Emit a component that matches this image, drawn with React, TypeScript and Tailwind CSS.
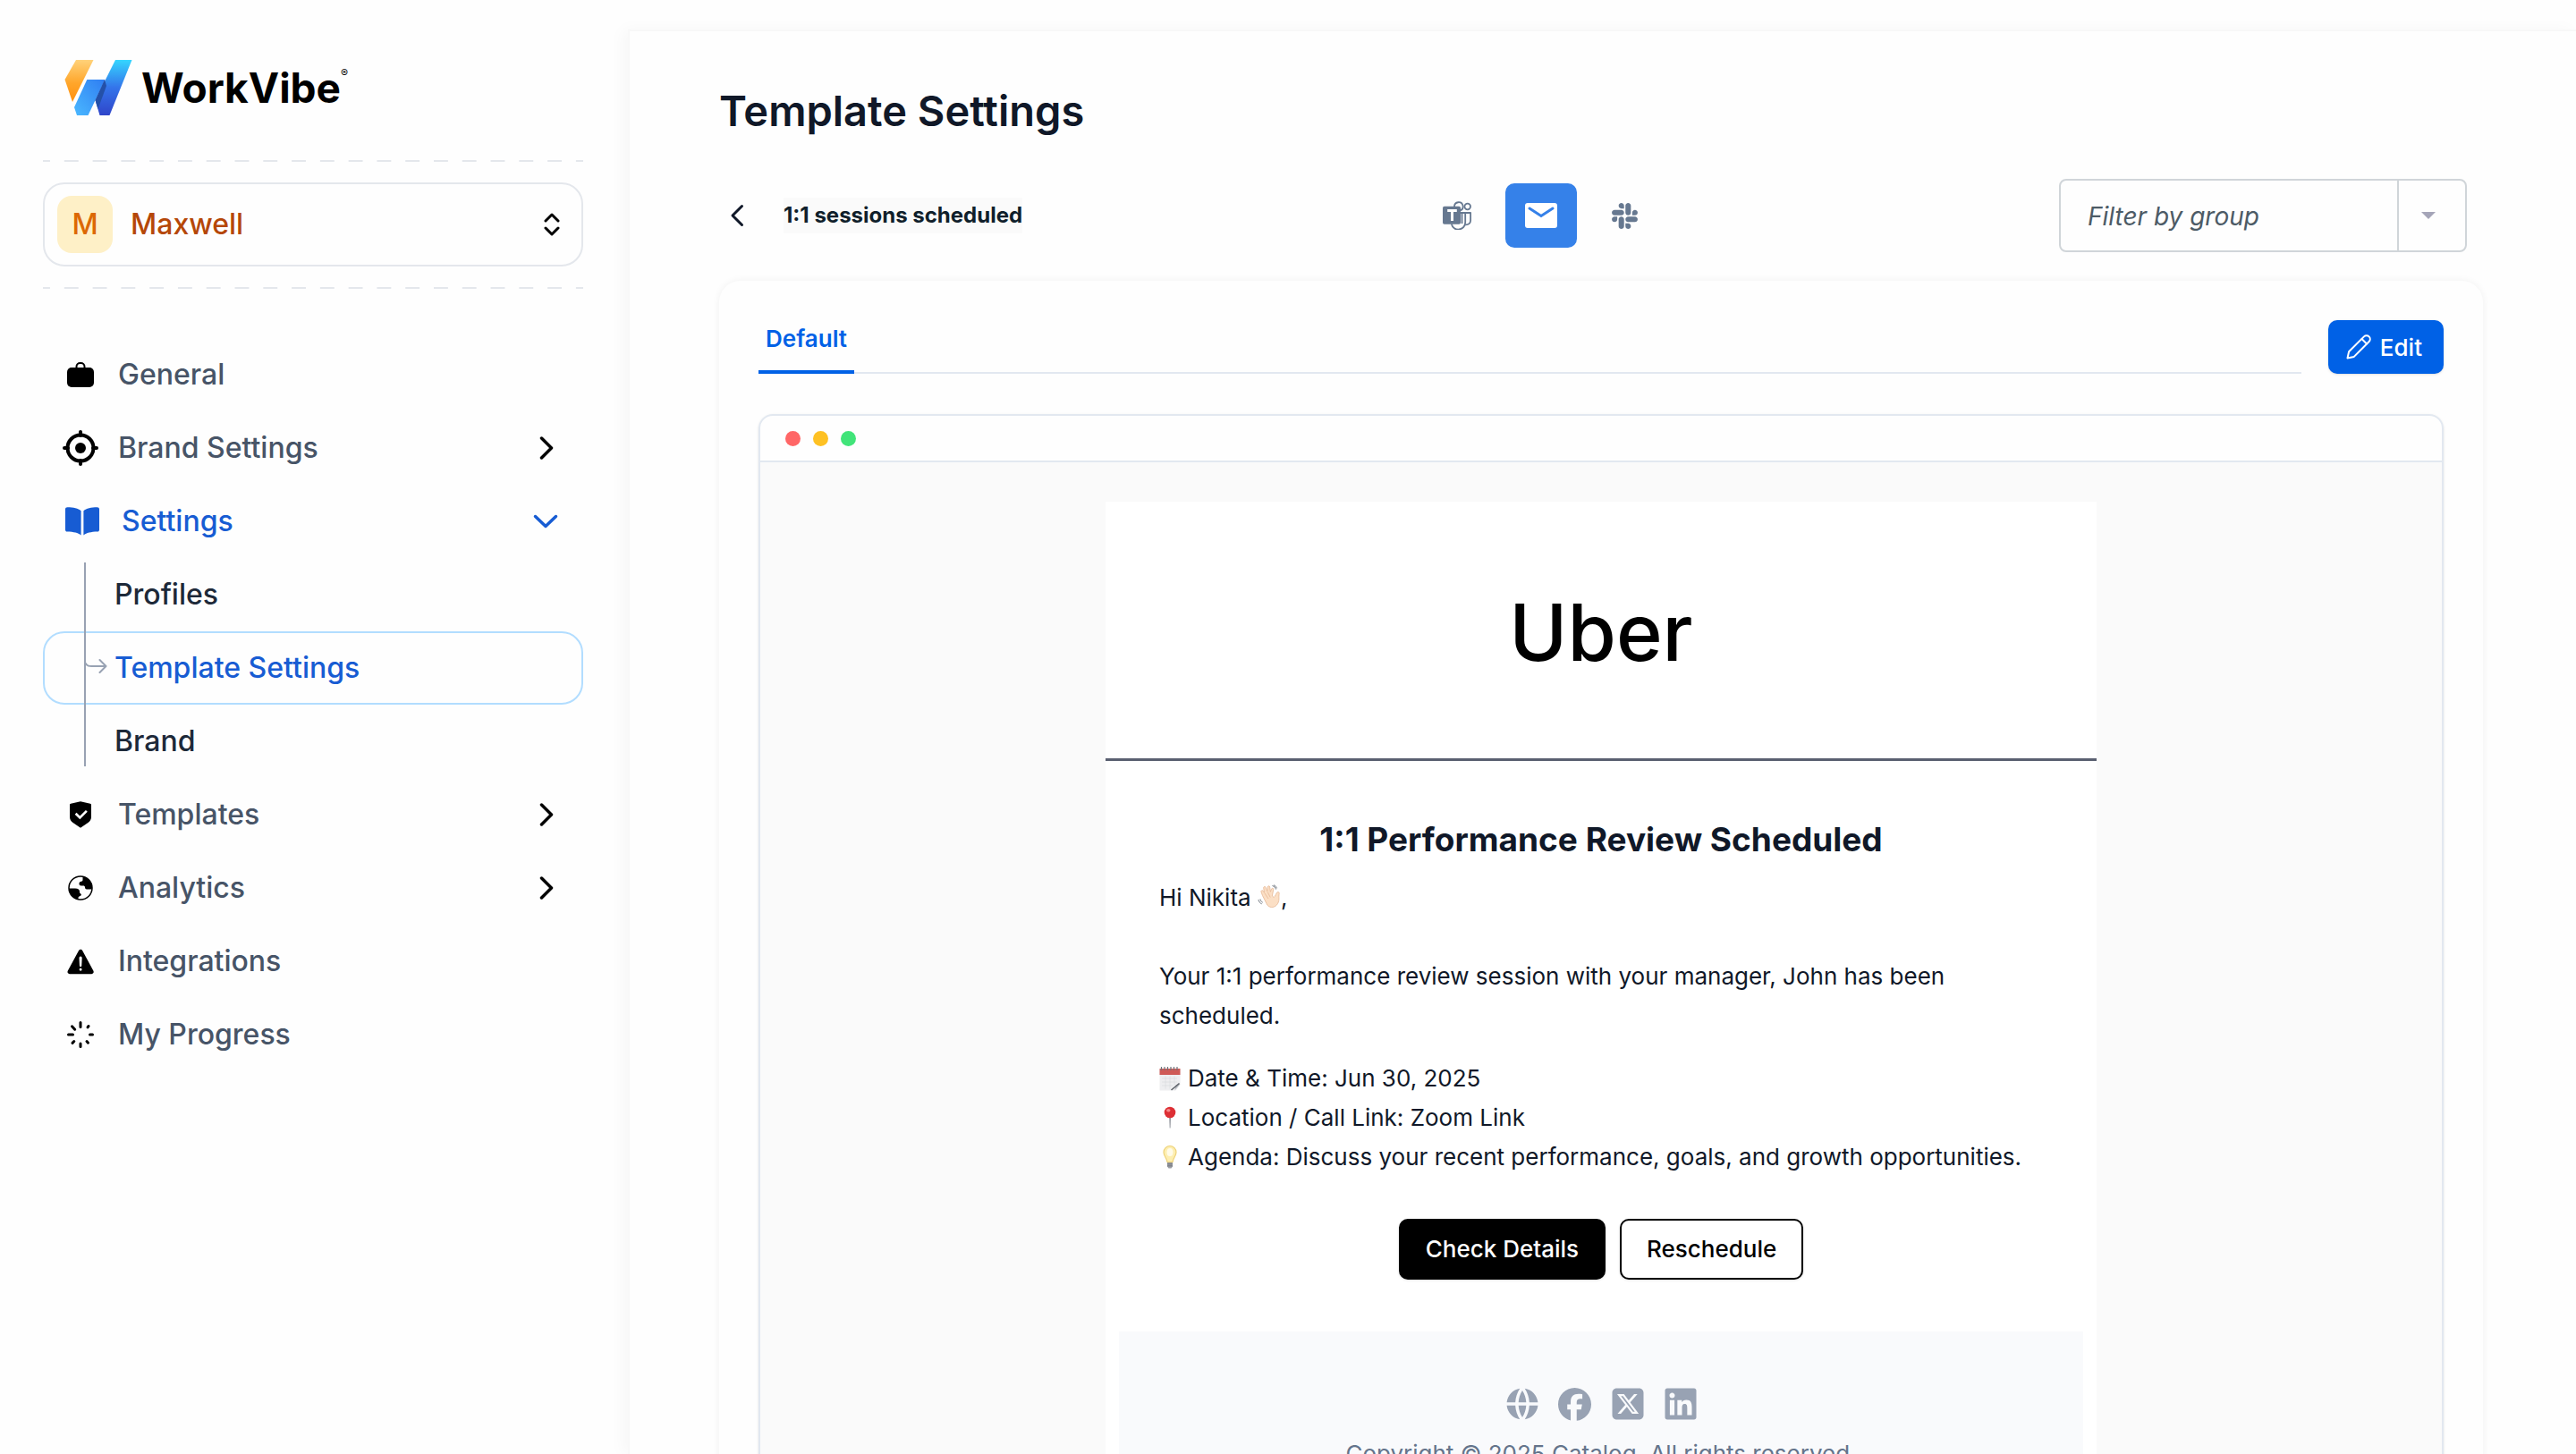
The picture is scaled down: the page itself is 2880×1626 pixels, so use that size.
import type { ReactNode } from "react";
import { FaSlack } from "react-icons/fa";
import { FaFacebook, FaLinkedin, FaSquareXTwitter } from "react-icons/fa6";
import { IoWarning } from "react-icons/io5";
import { RiGlobalFill, RiShieldCheckFill } from "react-icons/ri";

function LogoMark() {
  return (
    <svg width="76" height="62" viewBox="72 65 76 62" aria-hidden="true">
      <defs>
        <linearGradient id="wv-orange" x1="0" y1="0" x2="0" y2="1">
          <stop offset="0" stopColor="#ffd27a" />
          <stop offset="0.55" stopColor="#ffa62b" />
          <stop offset="1" stopColor="#ff8f0f" />
        </linearGradient>
        <linearGradient id="wv-cyan" x1="0" y1="0" x2="0" y2="1">
          <stop offset="0" stopColor="#35d6ff" />
          <stop offset="0.5" stopColor="#3474ea" />
          <stop offset="1" stopColor="#2f45c9" />
        </linearGradient>
        <linearGradient id="wv-blue" x1="1" y1="0" x2="0" y2="1">
          <stop offset="0" stopColor="#2f7df2" />
          <stop offset="1" stopColor="#4ab8ff" />
        </linearGradient>
      </defs>
      <path d="M85 65h19.500L81 112l-8.500-25z" fill="url(#wv-orange)" />
      <path d="M129 65h18.500L122.500 127h-11l-5-17z" fill="url(#wv-cyan)" />
      <path d="M97.300 87H117.500L98.500 127H86l-3-9z" fill="url(#wv-blue)" />
      <path d="M117 87l2 7-9.500 26-3-10z" fill="#2450a8" />
    </svg>
  );
}

function BagIcon() {
  return (
    <svg width="30" height="28" viewBox="0 0 30 28" aria-hidden="true">
      <path d="M10.500 8V5a4 4 0 0 1 4-4h1a4 4 0 0 1 4 4v3" fill="none" stroke="currentColor" strokeWidth="2" />
      <rect y="6" width="30" height="22" rx="5" fill="currentColor" />
    </svg>
  );
}

function TargetIcon() {
  return (
    <svg width="40" height="40" viewBox="0 0 40 40" fill="none" stroke="currentColor" strokeWidth="4" strokeLinecap="round" aria-hidden="true">
      <circle cx="20" cy="20" r="14.500" />
      <circle cx="20" cy="20" r="6" fill="currentColor" stroke="none" />
      <path d="M20 2v4M20 34v4M2 20h4M34 20h4" />
    </svg>
  );
}

function BookIcon() {
  return (
    <svg width="38" height="32" viewBox="0 0 38 32" fill="currentColor" aria-hidden="true">
      <path d="M17.600 4.200v27.300c-3.500-2.600-8-3.700-15.500-3.900C.8 27.500 0 26.700 0 25.500V2.600C0 1.100.9.300 2.400.3 9 .4 14.500 1.600 17.600 4.200z" />
      <path d="M20.400 4.200v27.300c3.500-2.600 8-3.700 15.500-3.900 1.300-.1 2.100-.9 2.100-2.100V2.600c0-1.500-.9-2.300-2.400-2.300-6.600.1-12.100 1.300-15.200 3.900z" />
    </svg>
  );
}

function EarthIcon() {
  return (
    <svg width="28" height="28" viewBox="0 0 28 28" aria-hidden="true">
      <circle cx="14" cy="14" r="13" fill="none" stroke="currentColor" strokeWidth="1.500" />
      <path d="M16.500 1.500C23 2.500 27 7.500 27 14c-.5 1.200-1.500 1.600-2.500 1.500H21c-1.500 0-2-1-2-2.200 0-1.300-.8-1.800-2-1.800h-2.200c-1.500 0-2.300-1-2.300-2.300 0-1.500.8-2.200 2.300-2.400 1.400-.2 1.700-1 1.700-2.300z" fill="currentColor" />
      <path d="M1 14.500h7c3.500 0 5 1.500 5 3.500 0 1.400.3 1.900 1.200 2.500 1 .7.900 2-.7 2.500-1.500.5-2 1-2 2.500v1.300C6 26 1.500 21.500 1 14.500z" fill="currentColor" />
    </svg>
  );
}

function SpinnerIcon() {
  return (
    <svg width="30" height="30" viewBox="0 0 30 30" fill="none" stroke="currentColor" strokeWidth="3" strokeLinecap="round" aria-hidden="true">
      <path d="M15 1.500v5M15 25v3.500M1.500 15h5M25.500 15h3M5.500 5.800l3.200 3.400M23 6.800l1-1.300M22 22.500l1.500 1.700M7.800 22.500l-1.800 1.900" />
    </svg>
  );
}

function ChevronRight() {
  return (
    <svg width="16" height="26" viewBox="0 0 16 26" fill="none" stroke="currentColor" strokeWidth="3.500" strokeLinecap="round" strokeLinejoin="round" aria-hidden="true">
      <path d="M2.500 2l11 11-11 11" />
    </svg>
  );
}

function ChevronDown() {
  return (
    <svg width="28" height="16" viewBox="0 0 28 16" fill="none" stroke="currentColor" strokeWidth="3.500" strokeLinecap="round" strokeLinejoin="round" aria-hidden="true">
      <path d="M2.500 2.500L14 13.500l11.500-11" />
    </svg>
  );
}

function TeamsIcon() {
  return (
    <svg width="32" height="32" viewBox="0 0 32 32" fill="none" stroke="currentColor" strokeWidth="1.800" strokeLinejoin="round" aria-hidden="true">
      <path d="M13 6a4.800 4.800 0 1 1 6.500 4.500" />
      <circle cx="27.700" cy="6" r="3.300" />
      <path d="M20 13h5.200v10.500a7.800 7.800 0 0 1-15.400 2" />
      <path d="M25.200 13h5.900v8.500c0 3-2.200 5-5.900 4.800" />
      <path d="M21.500 13v12" />
      <rect y="5.800" width="20" height="20" rx="1.800" fill="currentColor" stroke="none" />
      <path d="M5.200 10.500h10.600M10.500 10.500V22" stroke="#fff" strokeWidth="3" />
    </svg>
  );
}

function MailIcon() {
  return (
    <svg width="36" height="28" viewBox="0 0 36 28" aria-hidden="true">
      <rect width="36" height="28" rx="3" fill="#fff" />
      <path d="M5 6l13 8.500L31 6" fill="none" stroke="#3581e9" strokeWidth="3" strokeLinecap="round" />
    </svg>
  );
}

function PencilIcon() {
  return (
    <svg width="28" height="28" viewBox="0 0 28 28" fill="none" stroke="currentColor" strokeWidth="2" strokeLinecap="round" strokeLinejoin="round" aria-hidden="true">
      <path d="M1.500 26.500l1.600-7.300L20 2.400a3.900 3.900 0 0 1 5.600 5.600L8.800 24.900z" />
      <path d="M17.500 5l5.500 5.500" />
    </svg>
  );
}

function WaveEmoji() {
  return (
    <svg className="inline-block align-[-4px]" width="26" height="28" viewBox="0 0 26 28" role="img" aria-label="waving hand">
      <path d="M5.500 12.500L4 8.500c-.5-1.600 1.300-2.500 2.200-1.200l1.300 2L6.700 4c-.2-1.700 1.900-2.200 2.500-.6l1.600 4.200.5-4.700c.2-1.600 2.300-1.500 2.400.1l.6 5.300 1.300-3.200c.6-1.500 2.500-.9 2.200.6L16.300 13l2 1.500c1.700-1.500 2-4 3.600-5.600 1.100-1 2.700-.1 2.300 1.500-.9 3.800.8 7-1.800 11.300-2.600 4.300-8.200 5.300-11.500 1.500z" fill="#fbdfc5" stroke="#e6b795" strokeWidth="0.800" />
      <path d="M8 10l4 6M11.200 8.500l3 6" stroke="#e6b795" strokeWidth="0.800" fill="none" />
      <path d="M16.500 1.500c2 .5 3.500 2 4 4M18 .8c2 .8 3 2 3.500 3.500M1 17c.3 2.300 1.700 4 3.700 4.800M3 16.500c.3 1.800 1.300 3 2.700 3.700" stroke="#707780" strokeWidth="1" fill="none" />
    </svg>
  );
}

function CalendarEmoji() {
  return (
    <svg width="24" height="28" viewBox="0 0 24 28" aria-hidden="true">
      <path d="M.5 4h23v17l-5 6.500H.5z" fill="#eeeef0" />
      <path d="M23.500 20l-6 7.500 1-6z" fill="#b9bcc2" />
      <path d="M22.500 19.500l-9 7.500" stroke="#5d6168" strokeWidth="1.500" />
      <path d="M.5 3h23v7H.5z" fill="#cf5a57" />
      <path d="M2.500 1v4M6 1v4M9.500 1v4M13 1v4M16.500 1v4M20 1v4" stroke="#6f737a" strokeWidth="1.200" />
      <path d="M3 14h17M3 18h17M3 22h12M7 11.500v14M12 11.500v14M17 11.500v10" stroke="#dcdde0" strokeWidth="0.800" />
    </svg>
  );
}

function PinEmoji() {
  return (
    <svg width="24" height="28" viewBox="0 0 24 28" aria-hidden="true">
      <path d="M11.200 12h1.800l-.5 13.500h-.8z" fill="#8b8f96" />
      <circle cx="12" cy="8" r="6.300" fill="#dd2f35" />
      <ellipse cx="10.300" cy="5.800" rx="2.200" ry="1.700" fill="#f58a8a" />
    </svg>
  );
}

function BulbEmoji() {
  return (
    <svg width="24" height="28" viewBox="0 0 24 28" aria-hidden="true">
      <path d="M12 1.500a7 7 0 0 0-7 7c0 4.500 3.600 6.500 4 11h6c.4-4.500 4-6.500 4-11a7 7 0 0 0-7-7z" fill="#fdeeb0" stroke="#eed279" strokeWidth="1.200" />
      <ellipse cx="12" cy="8.500" rx="3.500" ry="4.500" fill="#fffbe8" />
      <path d="M9 20h6v4.500l-1.500 2h-3L9 24.500z" fill="#9a9da3" />
      <path d="M9 21.800h6M9 23.800h6" stroke="#6d7177" strokeWidth="0.800" />
    </svg>
  );
}

function DashedRule() {
  return (
    <div className="h-0.5 bg-[linear-gradient(to_right,#e4e7ec_0_25%,transparent_25%_75%,#e4e7ec_75%_100%)] bg-[length:32px_2px] bg-repeat-round" />
  );
}

type NavRowProps = { icon: ReactNode; label: string; expandable?: boolean };

function NavRow({ icon, label, expandable }: NavRowProps) {
  return (
    <a href="#" className="flex h-[82px] items-center gap-[18px] pr-[33px] pl-[18px] text-[#475467]">
      <span className="flex w-12 justify-center text-black">{icon}</span>
      <span className="flex-1">{label}</span>
      {expandable && (
        <span className="text-black">
          <ChevronRight />
        </span>
      )}
    </a>
  );
}

function Sidebar() {
  return (
    <aside className="w-[702px] shrink-0 pt-[65px] pr-[50px] pl-12">
      <a href="#" aria-label="WorkVibe" className="flex h-[62px] items-center gap-2.5 pt-1 pl-6 text-black">
        <LogoMark />
        <span className="flex items-start">
          <span className="text-[46px] leading-[60px] font-bold">WorkVibe</span>
          <span className="pt-1.5 text-[12px] leading-[16px]">®</span>
        </span>
      </a>

      <div className="mt-[52px]">
        <DashedRule />
      </div>
      <button type="button" className="my-[23px] flex h-[94px] w-full items-center rounded-3xl border-2 border-[#e4e7ec] pr-6 pl-3.5 text-[32px] font-medium text-[#b54708]">
        <span className="flex h-16 w-[62px] items-center justify-center rounded-2xl bg-[#fef0c7] text-[#dc6803]">M</span>
        <span className="ml-5 flex-1 text-left">Maxwell</span>
        <svg width="18" height="26" viewBox="0 0 18 26" fill="none" stroke="#000" strokeWidth="3" strokeLinecap="round" strokeLinejoin="round" aria-hidden="true">
          <path d="M2 9l7-7 7 7M2 17l7 7 7-7" />
        </svg>
      </button>
      <DashedRule />

      <nav className="mt-[55px] text-[32px] font-medium">
        <NavRow icon={<BagIcon />} label="General" />
        <NavRow icon={<TargetIcon />} label="Brand Settings" expandable />
        <a href="#" className="flex h-[82px] items-center gap-[18px] pr-7 pl-[18px] text-[#175cd3]">
          <span className="flex w-[52px] justify-center">
            <BookIcon />
          </span>
          <span className="flex-1">Settings</span>
          <ChevronDown />
        </a>
        <div className="relative">
          <a href="#" className="flex h-[82px] items-center pl-20 text-[#1d2939]">
            Profiles
          </a>
          <a href="#" aria-current="page" className="flex h-[82px] items-center rounded-3xl border-2 border-[#b2ddff] pl-[78px] text-[#175cd3]">
            Template Settings
          </a>
          <a href="#" className="flex h-[82px] items-center pl-20 text-[#1d2939]">
            Brand
          </a>
          <div className="absolute top-[5px] bottom-[13px] left-[46px] flex items-center text-[#98a2b3]">
            <span className="h-full w-0.5 bg-[#98a2b3]" />
            <svg width="24" height="20" viewBox="0 0 24 20" fill="none" stroke="currentColor" strokeWidth="2" strokeLinecap="round" strokeLinejoin="round" aria-hidden="true">
              <path d="M0 9c1 2.500 3 3 6 3h16M15.500 5l7 7-7 7" />
            </svg>
          </div>
        </div>
        <NavRow icon={<RiShieldCheckFill size={32} />} label="Templates" expandable />
        <NavRow icon={<EarthIcon />} label="Analytics" expandable />
        <NavRow icon={<IoWarning size={37} />} label="Integrations" />
        <NavRow icon={<SpinnerIcon />} label="My Progress" />
      </nav>
    </aside>
  );
}

function Toolbar() {
  return (
    <div className="mt-12 flex h-[82px] items-center justify-between pr-[18px] pl-3">
      <div className="flex items-center gap-11">
        <button type="button" aria-label="Back" className="text-[#101828]">
          <svg width="16" height="26" viewBox="0 0 16 26" fill="none" stroke="currentColor" strokeWidth="3" strokeLinecap="round" strokeLinejoin="round" aria-hidden="true">
            <path d="M13.500 2.500L3 13l10.500 10.500" />
          </svg>
        </button>
        <span className="bg-[#fafafa] text-[24px] leading-10 font-bold text-[#101f2b]">1:1 sessions scheduled</span>
      </div>

      <div className="flex items-center gap-3.5 text-[#667890]">
        <button type="button" aria-label="Microsoft Teams" className="flex h-[72px] w-20 items-center justify-center">
          <TeamsIcon />
        </button>
        <button type="button" aria-label="Email" aria-pressed="true" className="flex h-[72px] w-20 items-center justify-center rounded-[10px] bg-[#3581e9]">
          <MailIcon />
        </button>
        <button type="button" aria-label="Slack" className="flex h-[72px] w-20 items-center justify-center">
          <FaSlack size={33} />
        </button>
      </div>

      <div className="flex h-[82px] w-[456px] items-center rounded-lg border-2 border-[#d0d5d9]">
        <select aria-label="Filter by group" defaultValue="" className="h-full flex-1 appearance-none bg-transparent pt-0.5 pl-[30px] text-[28px] text-[#4d5b66] italic">
          <option value="">Filter by group</option>
        </select>
        <span className="flex h-full w-[76px] items-center justify-center border-l-2 border-[#d0d5d9] pr-2">
          <svg width="16" height="8" viewBox="0 0 16 8" fill="#a5a5b8" aria-hidden="true">
            <path d="M0 0h16L8 8z" />
          </svg>
        </span>
      </div>
    </div>
  );
}

function EmailFooter() {
  return (
    <footer className="mx-[15px] mt-[58px] flex flex-col items-center bg-[#f9fafc] pt-[63px] pb-16">
      <div className="flex gap-[23px] text-[#98a2b3]">
        <a href="#" aria-label="Website" className="flex size-9 items-center justify-center">
          <RiGlobalFill size={42} className="shrink-0" />
        </a>
        <a href="#" aria-label="Facebook" className="flex size-9 items-center justify-center">
          <FaFacebook size={37} className="shrink-0" />
        </a>
        <a href="#" aria-label="X" className="flex size-9 items-center justify-center">
          <FaSquareXTwitter size={40} className="shrink-0" />
        </a>
        <a href="#" aria-label="LinkedIn" className="flex size-9 items-center justify-center">
          <FaLinkedin size={40} className="shrink-0" />
        </a>
      </div>
      <p className="mt-4 text-[26px] leading-[44px] text-[#64748b]">Copyright © 2025 Catalog. All rights reserved.</p>
    </footer>
  );
}

function EmailPreview() {
  return (
    <article className="mx-auto w-full max-w-[1108px] bg-white text-[26px] leading-[44px] text-[#101828]">
      <header className="flex h-[290px] items-center justify-center border-b-[3px] border-[#5a6070] pt-1">
        <span className="text-[88px] leading-[100px] font-medium text-black">Uber</span>
      </header>
      <h2 className="mt-16 text-center text-[37px] leading-[48px] font-bold">1:1 Performance Review Scheduled</h2>
      <div className="mt-[19px] px-[60px]">
        <p>
          Hi Nikita <WaveEmoji />,
        </p>
        <p className="mt-11">Your 1:1 performance review session with your manager, John has been scheduled.</p>
        <ul className="mt-[26px]">
          <li className="flex items-center gap-2">
            <CalendarEmoji />
            Date &amp; Time: Jun 30, 2025
          </li>
          <li className="flex items-center gap-2">
            <PinEmoji />
            Location / Call Link: Zoom Link
          </li>
          <li className="flex items-center gap-2">
            <BulbEmoji />
            Agenda: Discuss your recent performance, goals, and growth opportunities.
          </li>
        </ul>
      </div>
      <div className="mt-[47px] flex justify-center gap-4 font-medium">
        <button type="button" className="h-[68px] rounded-[10px] border-2 border-black bg-black px-7 text-white shadow-sm">
          Check Details
        </button>
        <button type="button" className="h-[68px] rounded-[10px] border-2 border-black bg-white px-7 text-black shadow-sm">
          Reschedule
        </button>
      </div>
      <EmailFooter />
    </article>
  );
}

export default function App() {
  return (
    <div className="flex h-screen overflow-hidden bg-[#fefefe] font-['Inter',sans-serif]">
      <Sidebar />
      <main className="mt-[33px] flex-1 border-t-2 border-l-2 border-[#f8f8f8] pt-[61px] pr-[104px] pl-[100px] shadow-[-6px_0_16px_rgba(0,0,0,0.03)]">
        <h1 className="text-[47px] leading-[56px] font-semibold text-[#101828]">Template Settings</h1>
        <Toolbar />
        <section className="mt-8 rounded-3xl px-11 py-11 shadow-[0_0_8px_rgba(0,0,0,0.06)]">
          <div className="flex gap-[30px]">
            <div role="tablist" className="flex h-[60px] flex-1 border-b-2 border-[#e2e8f0]">
              <button type="button" role="tab" aria-selected="true" className="h-[60px] border-b-4 border-[#0061e6] px-2 pb-3.5 text-[26px] leading-[40px] font-semibold text-[#0061e6]">
                Default
              </button>
            </div>
            <button type="button" className="flex h-[60px] items-center gap-2.5 rounded-[10px] bg-[#0061e6] pr-6 pl-5 text-[26px] font-medium text-white shadow-sm">
              <PencilIcon />
              Edit
            </button>
          </div>

          <div className="mt-[45px] rounded-2xl border-2 border-[#e2e8f0] shadow-sm">
            <div className="flex h-[52px] items-center gap-3.5 border-b-2 border-[#e2e8f0] pl-7">
              <span className="size-[17px] rounded-full bg-[#ff6666]" />
              <span className="size-[17px] rounded-full bg-[#fec123]" />
              <span className="size-[17px] rounded-full bg-[#41e479]" />
            </div>
            <div className="bg-[#fafafa] pt-11 pb-11">
              <EmailPreview />
            </div>
          </div>
        </section>
      </main>
    </div>
  );
}
